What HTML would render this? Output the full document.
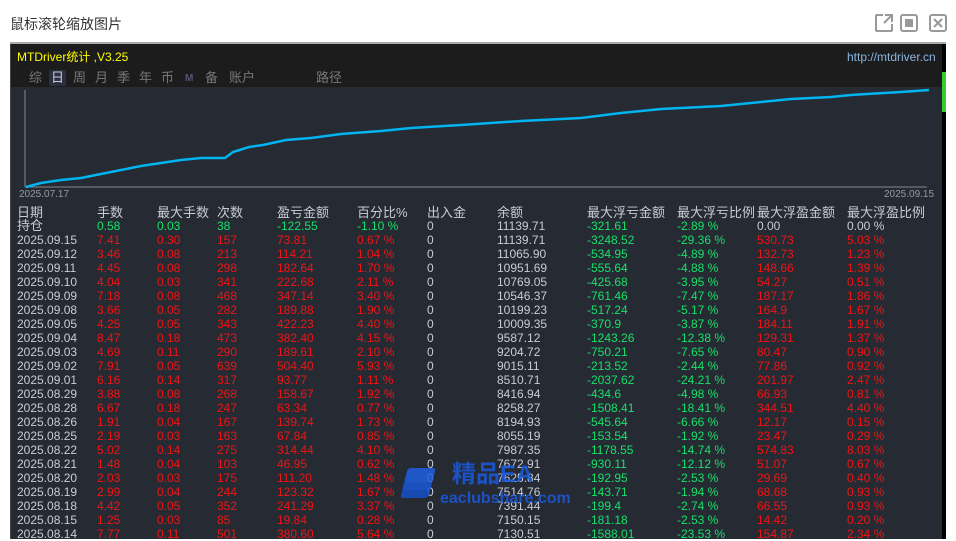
<!DOCTYPE html>
<html><head><meta charset="utf-8"><style>
*{margin:0;padding:0;box-sizing:border-box}
body{width:956px;height:539px;overflow:hidden;background:#fff;position:relative;font-family:"Liberation Sans","Noto Sans CJK SC",sans-serif}
.title{position:absolute;left:10px;top:14px;font-size:14px;color:#333}
.topline{position:absolute;left:10px;top:42px;width:936px;height:2px;background:#aaa}
.panel{position:absolute;left:10px;top:44px;width:932px;height:495px;background:#252a33;border-left:1px solid #444}
.hdr{position:absolute;left:0;top:0;width:931px;height:43px;background:#1c1c1c}
.side{position:absolute;left:942px;top:44px;width:4px;height:495px;background:#000}
.t{position:absolute;font-size:12px;white-space:nowrap;line-height:14px}
.row{position:absolute;left:0;height:14px;width:931px}
.row span{position:absolute;top:0;font-size:12px;line-height:14px;white-space:nowrap}
.w{color:#c8ccd4}.r{color:#f01414}.g{color:#18e06a}
</style></head><body>
<div class="title">鼠标滚轮缩放图片</div>
<svg style="position:absolute;left:874px;top:13px" width="76" height="20" fill="none" stroke="#999" stroke-width="2">
<path d="M9 2H3a1 1 0 0 0-1 1v14a1 1 0 0 0 1 1h14a1 1 0 0 0 1-1v-6M11 2h7v7M18 2l-8 8"/>
<rect x="27" y="2" width="16" height="16" rx="2"/><rect x="31" y="6" width="8" height="8" fill="#999" stroke="none"/>
<rect x="56" y="2" width="16" height="16" rx="2"/><path d="M60 6l8 8M68 6l-8 8"/>
</svg>
<div class="topline"></div>
<div class="side"><div style="position:absolute;left:0;top:28px;width:4px;height:40px;background:#3c3"></div></div>
<div class="panel">
<div class="hdr">
<div class="t" style="left:6px;top:6px;color:#ff0">MTDriver统计 ,V3.25</div>
<div class="t" style="left:836px;top:6px;color:#8ab4e0">http://mtdriver.cn</div>
<div style="position:absolute;left:38px;top:26px;width:17px;height:16px;background:#2a3040;border-radius:2px"></div>
<div class="t" style="left:18px;top:27px;color:#777;font-size:13px">综</div>
<div class="t" style="left:40px;top:27px;color:#ccd;font-size:13px">日</div>
<div class="t" style="left:62px;top:27px;color:#777;font-size:13px">周</div>
<div class="t" style="left:84px;top:27px;color:#777;font-size:13px">月</div>
<div class="t" style="left:106px;top:27px;color:#777;font-size:13px">季</div>
<div class="t" style="left:128px;top:27px;color:#777;font-size:13px">年</div>
<div class="t" style="left:150px;top:27px;color:#777;font-size:13px">币</div>
<div class="t" style="left:174px;top:28px;color:#557;font-size:10px;font-weight:bold">M</div>
<div class="t" style="left:194px;top:27px;color:#777;font-size:13px">备</div>
<div class="t" style="left:218px;top:27px;color:#777;font-size:13px">账户</div>
<div class="t" style="left:305px;top:27px;color:#777;font-size:13px">路径</div>
</div>
<svg style="position:absolute;left:0;top:43px" width="931" height="110">
<line x1="14" y1="3" x2="14" y2="100" stroke="#888" stroke-width="1"/>
<line x1="14" y1="100" x2="916" y2="100" stroke="#888" stroke-width="1"/>
<polyline fill="none" stroke="#00b4f0" stroke-width="2.5" points="15,100 30,96 50,93 70,91 90,87 110,83 130,79 150,76 170,73 190,71 214,71 222,65 238,60 252,58 275,53 300,51 330,47 370,44 400,41 450,38 510,34 570,31 610,26 650,22 710,19 750,15 780,12 820,10 840,8 890,5 918,3"/>
</svg>
<div class="t" style="left:8px;top:144px;color:#999;font-size:10px">2025.07.17</div>
<div class="t" style="left:873px;top:144px;color:#999;font-size:10px">2025.09.15</div>
<div class="row" style="top:162px"><span class="w" style="left:6px;font-size:13px">日期</span><span class="w" style="left:86px;font-size:13px">手数</span><span class="w" style="left:146px;font-size:13px">最大手数</span><span class="w" style="left:206px;font-size:13px">次数</span><span class="w" style="left:266px;font-size:13px">盈亏金额</span><span class="w" style="left:346px;font-size:13px">百分比%</span><span class="w" style="left:416px;font-size:13px">出入金</span><span class="w" style="left:486px;font-size:13px">余额</span><span class="w" style="left:576px;font-size:13px">最大浮亏金额</span><span class="w" style="left:666px;font-size:13px">最大浮亏比例</span><span class="w" style="left:746px;font-size:13px">最大浮盈金额</span><span class="w" style="left:836px;font-size:13px">最大浮盈比例</span></div>
<div class="row" style="top:175px"><span class="w" style="left:6px;font-size:13px">持仓</span><span class="g" style="left:86px">0.58</span><span class="g" style="left:146px">0.03</span><span class="g" style="left:206px">38</span><span class="g" style="left:266px">-122.55</span><span class="g" style="left:346px">-1.10 %</span><span class="w" style="left:416px">0</span><span class="w" style="left:486px">11139.71</span><span class="g" style="left:576px">-321.61</span><span class="g" style="left:666px">-2.89 %</span><span class="w" style="left:746px">0.00</span><span class="w" style="left:836px">0.00 %</span></div>
<div id="rows"></div>
</div>
<script>
var d=[["2025.09.15","7.41","0.30","157","73.81","0.67 %","11139.71","-3248.52","-29.36 %","530.73","5.03 %"],
["2025.09.12","3.46","0.08","213","114.21","1.04 %","11065.90","-534.95","-4.89 %","132.73","1.23 %"],
["2025.09.11","4.45","0.08","298","182.64","1.70 %","10951.69","-555.64","-4.88 %","148.66","1.39 %"],
["2025.09.10","4.04","0.03","341","222.68","2.11 %","10769.05","-425.68","-3.95 %","54.27","0.51 %"],
["2025.09.09","7.18","0.08","468","347.14","3.40 %","10546.37","-761.46","-7.47 %","187.17","1.86 %"],
["2025.09.08","3.66","0.05","282","189.88","1.90 %","10199.23","-517.24","-5.17 %","164.9","1.67 %"],
["2025.09.05","4.25","0.05","343","422.23","4.40 %","10009.35","-370.9","-3.87 %","184.11","1.91 %"],
["2025.09.04","8.47","0.18","473","382.40","4.15 %","9587.12","-1243.26","-12.38 %","129.31","1.37 %"],
["2025.09.03","4.69","0.11","290","189.61","2.10 %","9204.72","-750.21","-7.65 %","80.47","0.90 %"],
["2025.09.02","7.91","0.05","639","504.40","5.93 %","9015.11","-213.52","-2.44 %","77.86","0.92 %"],
["2025.09.01","6.16","0.14","317","93.77","1.11 %","8510.71","-2037.62","-24.21 %","201.97","2.47 %"],
["2025.08.29","3.88","0.08","268","158.67","1.92 %","8416.94","-434.6","-4.98 %","66.93","0.81 %"],
["2025.08.28","6.67","0.18","247","63.34","0.77 %","8258.27","-1508.41","-18.41 %","344.51","4.40 %"],
["2025.08.26","1.91","0.04","167","139.74","1.73 %","8194.93","-545.64","-6.66 %","12.17","0.15 %"],
["2025.08.25","2.19","0.03","163","67.84","0.85 %","8055.19","-153.54","-1.92 %","23.47","0.29 %"],
["2025.08.22","5.02","0.14","275","314.44","4.10 %","7987.35","-1178.55","-14.74 %","574.83","8.03 %"],
["2025.08.21","1.48","0.04","103","46.95","0.62 %","7672.91","-930.11","-12.12 %","51.07","0.67 %"],
["2025.08.20","2.03","0.03","175","111.20","1.48 %","7625.84","-192.95","-2.53 %","29.69","0.40 %"],
["2025.08.19","2.99","0.04","244","123.32","1.67 %","7514.76","-143.71","-1.94 %","68.68","0.93 %"],
["2025.08.18","4.42","0.05","352","241.29","3.37 %","7391.44","-199.4","-2.74 %","66.55","0.93 %"],
["2025.08.15","1.25","0.03","85","19.84","0.28 %","7150.15","-181.18","-2.53 %","14.42","0.20 %"],
["2025.08.14","7.77","0.11","501","380.60","5.64 %","7130.51","-1588.01","-23.53 %","154.87","2.34 %"]];
var L=[6,86,146,206,266,346,416,486,576,666,746,836],h="";
d.forEach(function(r,i){var c=[["w",r[0]],["r",r[1]],["r",r[2]],["r",r[3]],["r",r[4]],["r",r[5]],["w","0"],["w",r[6]],["g",r[7]],["g",r[8]],["r",r[9]],["r",r[10]]];
h+='<div class="row" style="top:'+(189+i*14)+'px">';c.forEach(function(x,j){h+='<span class="'+x[0]+'" style="left:'+L[j]+'px">'+x[1]+'</span>'});h+='</div>';});
document.getElementById('rows').outerHTML=h;
</script>
<div style="position:absolute;left:398px;top:466px;width:40px;height:36px;opacity:.85">
<div style="position:absolute;left:4px;top:18px;width:28px;height:14px;background:#1550c8;transform:skewX(-15deg);border-radius:3px"></div>
<div style="position:absolute;left:6px;top:10px;width:28px;height:14px;background:#1a58d8;transform:skewX(-15deg);border-radius:3px"></div>
<div style="position:absolute;left:8px;top:2px;width:28px;height:14px;background:#2060e0;transform:skewX(-15deg);border-radius:3px"></div></div>
<div class="t" style="left:452px;top:462px;font-size:24px;line-height:26px;color:#1a5ae0;opacity:.85;font-weight:bold">精品EA</div>
<div class="t" style="left:440px;top:490px;font-size:16px;line-height:18px;color:#1a5ae0;opacity:.85;font-weight:bold">eaclubshare.com</div>
</body></html>
